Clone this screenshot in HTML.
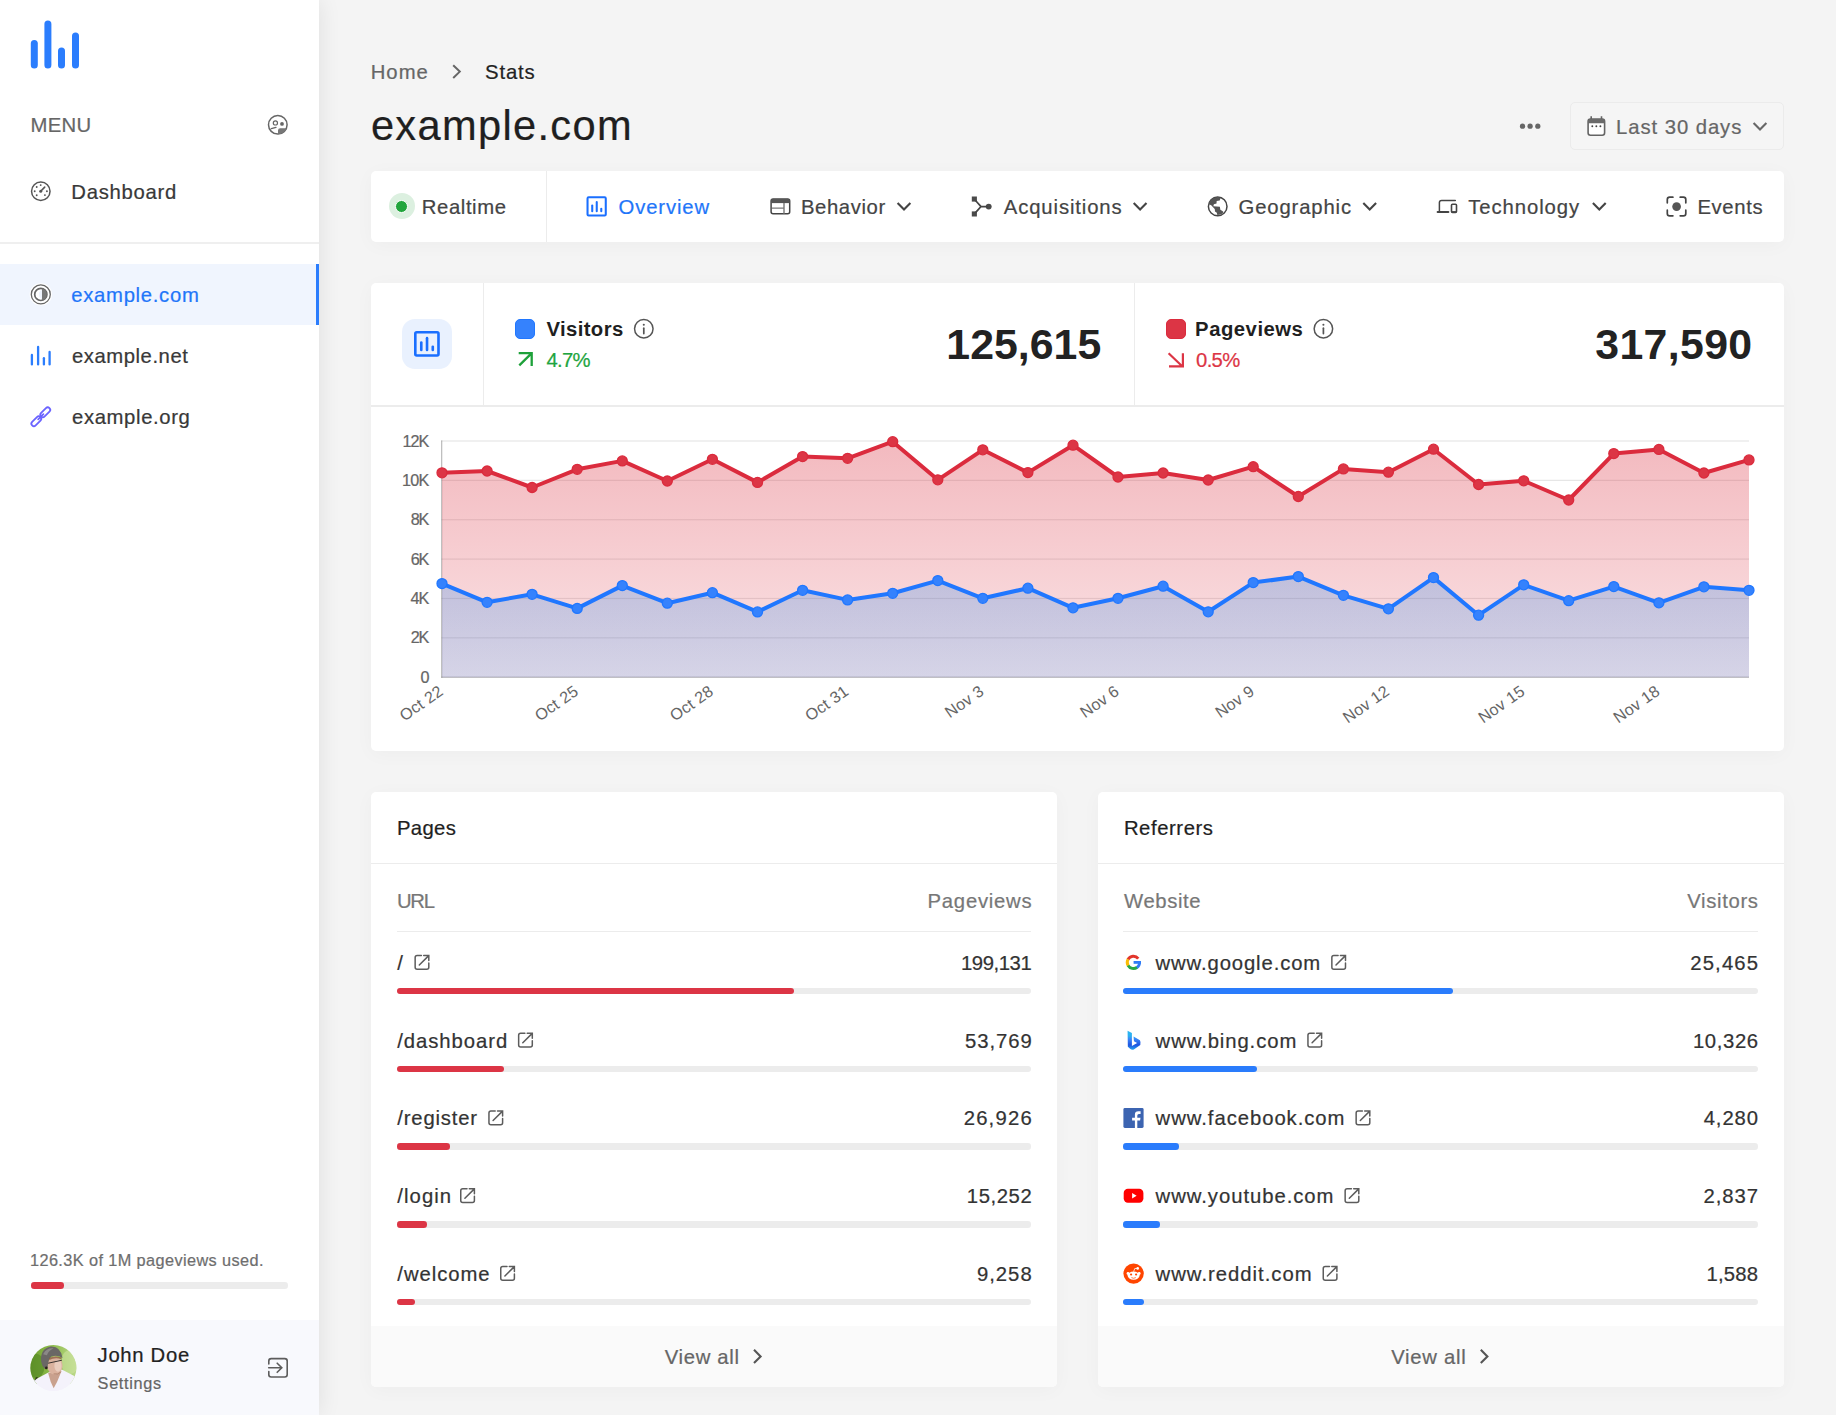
<!DOCTYPE html>
<html lang="en">
<head>
<meta charset="utf-8">
<title>example.com - Stats</title>
<style>
html,body{margin:0;padding:0}
body{width:1836px;height:1415px;position:relative;overflow:hidden;background:#f4f4f4;font-family:"Liberation Sans",sans-serif;}
.t{position:absolute;white-space:nowrap;line-height:1;font-family:"Liberation Sans",sans-serif;-webkit-text-stroke-width:.22px;}
.a{position:absolute;}
.card{position:absolute;background:#fff;border-radius:5px;box-shadow:0 3px 20px rgba(0,0,0,.03);}
.hl{position:absolute;height:1px;background:#ececec;}
.vl{position:absolute;width:1px;background:#ececec;}
.bar{position:absolute;height:6.5px;border-radius:3.25px;background:#ececec;}
.bar i{position:absolute;left:0;top:0;height:6.5px;border-radius:3.25px;display:block;}
.red i{background:#dc3545}.blue i{background:#2a7cfc}
svg{position:absolute;overflow:visible}
</style>
</head>
<body>
<!-- sidebar -->
<div class="a" style="left:0;top:0;width:319px;height:1415px;background:#fff;box-shadow:0 0 22px rgba(0,0,0,.09);"></div>
<div class="hl" style="left:0;top:242.2px;width:319px;height:1.4px;background:#efefef"></div>
<div class="a" style="left:0;top:264px;width:319px;height:61px;background:#f0f5fe;"></div>
<div class="a" style="left:316px;top:264px;width:3px;height:61px;background:#2b7dfd;"></div>
<div class="bar red" style="left:30.6px;top:1282.4px;width:257.4px;"><i style="width:33.3px"></i></div>
<div class="a" style="left:0;top:1320px;width:319px;height:95px;background:#f8f9fd;"></div>

<!-- date button -->
<div class="a" style="left:1570px;top:102px;width:212px;height:46px;border:1px solid #ebebeb;border-radius:5px;background:#f5f5f5"></div>

<!-- nav card -->
<div class="card" style="left:371px;top:171px;width:1412.5px;height:71px;"></div>
<div class="vl" style="left:546px;top:171px;height:71px;"></div>
<div class="a" style="left:388.6px;top:193.3px;width:26px;height:26px;border-radius:50%;background:#dcf0e0"></div>
<div class="a" style="left:395.2px;top:199.9px;width:10.8px;height:10.8px;border-radius:50%;background:#22a53d;border:1px solid #fff"></div>

<!-- stats card -->
<div class="card" style="left:371px;top:283px;width:1412.5px;height:467.5px;"></div>
<div class="hl" style="left:371px;top:405px;width:1412.5px;height:1.5px"></div>
<div class="vl" style="left:483px;top:283px;height:122px;"></div>
<div class="vl" style="left:1133.6px;top:283px;height:122px;"></div>
<div class="a" style="left:401.7px;top:318.7px;width:50.7px;height:50.7px;border-radius:13px;background:#e9f1fe"></div>
<div class="a" style="left:515.3px;top:318.7px;width:18.1px;height:18.1px;border-radius:5px;background:#3582fd;border:1.1px solid #2077ff"></div>
<div class="a" style="left:1165.5px;top:318.7px;width:18px;height:18.1px;border-radius:5px;background:#dc3545;border:1.1px solid #db2b3d"></div>

<!-- pages card -->
<div class="card" style="left:371px;top:792px;width:686.3px;height:595px;overflow:hidden">
  <div class="a" style="left:0;top:534px;width:100%;height:61px;background:#fafafa"></div>
</div>
<div class="hl" style="left:371px;top:862.5px;width:686.3px;height:1.5px"></div>
<div class="hl" style="left:397px;top:930.5px;width:634.4px;height:1.5px"></div>
<div class="bar red" style="left:396.6px;top:987.90px;width:634.8px"><i style="width:397.9px"></i></div>
<div class="bar red" style="left:396.6px;top:1065.65px;width:634.8px"><i style="width:107px"></i></div>
<div class="bar red" style="left:396.6px;top:1143.40px;width:634.8px"><i style="width:53.6px"></i></div>
<div class="bar red" style="left:396.6px;top:1221.15px;width:634.8px"><i style="width:30.4px"></i></div>
<div class="bar red" style="left:396.6px;top:1298.90px;width:634.8px"><i style="width:18.8px"></i></div>

<!-- referrers card -->
<div class="card" style="left:1098px;top:792px;width:685.7px;height:595px;overflow:hidden">
  <div class="a" style="left:0;top:534px;width:100%;height:61px;background:#fafafa"></div>
</div>
<div class="hl" style="left:1098px;top:862.5px;width:685.7px;height:1.5px"></div>
<div class="hl" style="left:1123px;top:930.5px;width:634.8px;height:1.5px"></div>
<div class="bar blue" style="left:1122.9px;top:987.90px;width:634.9px"><i style="width:330.6px"></i></div>
<div class="bar blue" style="left:1122.9px;top:1065.65px;width:634.9px"><i style="width:134.1px"></i></div>
<div class="bar blue" style="left:1122.9px;top:1143.40px;width:634.9px"><i style="width:56.6px"></i></div>
<div class="bar blue" style="left:1122.9px;top:1221.15px;width:634.9px"><i style="width:37.3px"></i></div>
<div class="bar blue" style="left:1122.9px;top:1298.90px;width:634.9px"><i style="width:20.8px"></i></div>
<!-- chart -->
<svg width="1836" height="1415" viewBox="0 0 1836 1415" style="left:0;top:0;pointer-events:none">
<defs>
<linearGradient id="gr" gradientUnits="userSpaceOnUse" x1="0" y1="441.0" x2="0" y2="677.2"><stop offset="0" stop-color="#dc3545" stop-opacity="0.345"/><stop offset="1" stop-color="#dc3545" stop-opacity="0.135"/></linearGradient>
<linearGradient id="gb" gradientUnits="userSpaceOnUse" x1="0" y1="441.0" x2="0" y2="677.2"><stop offset="0" stop-color="#2f8eed" stop-opacity="0.395"/><stop offset="1" stop-color="#2f8eed" stop-opacity="0.18"/></linearGradient>
</defs>
<rect x="441.5" y="440.40" width="1307.5" height="1.2" fill="#000" fill-opacity="0.1"/>
<rect x="441.5" y="479.77" width="1307.5" height="1.2" fill="#000" fill-opacity="0.1"/>
<rect x="441.5" y="519.13" width="1307.5" height="1.2" fill="#000" fill-opacity="0.1"/>
<rect x="441.5" y="558.50" width="1307.5" height="1.2" fill="#000" fill-opacity="0.1"/>
<rect x="441.5" y="597.87" width="1307.5" height="1.2" fill="#000" fill-opacity="0.1"/>
<rect x="441.5" y="637.23" width="1307.5" height="1.2" fill="#000" fill-opacity="0.1"/>
<rect x="441.5" y="676.60" width="1307.5" height="1.3" fill="#000" fill-opacity="0.25"/>
<rect x="441.0" y="440.4" width="1.3" height="237.4" fill="#000" fill-opacity="0.25"/>
<path d="M442.0,677.2 L442.0,472.8 L487.1,471.0 L532.1,487.5 L577.2,469.3 L622.3,460.9 L667.3,481.0 L712.4,459.3 L757.5,482.4 L802.6,456.6 L847.6,458.3 L892.7,441.7 L937.8,479.8 L982.8,449.8 L1027.9,472.6 L1073.0,445.2 L1118.0,477.0 L1163.1,473.0 L1208.2,480.0 L1253.2,466.7 L1298.3,496.5 L1343.4,468.9 L1388.4,472.2 L1433.5,449.2 L1478.6,484.5 L1523.7,480.8 L1568.7,500.0 L1613.8,453.6 L1658.9,449.4 L1703.9,473.0 L1749.0,459.9 L1749.0,677.2 Z" fill="url(#gr)"/>
<path d="M442.0,677.2 L442.0,583.6 L487.1,602.3 L532.1,594.3 L577.2,608.4 L622.3,585.6 L667.3,603.2 L712.4,592.7 L757.5,611.9 L802.6,590.3 L847.6,599.9 L892.7,593.3 L937.8,580.6 L982.8,598.3 L1027.9,588.2 L1073.0,607.8 L1118.0,598.3 L1163.1,586.2 L1208.2,611.8 L1253.2,582.6 L1298.3,576.6 L1343.4,595.3 L1388.4,608.8 L1433.5,577.6 L1478.6,615.2 L1523.7,584.8 L1568.7,600.7 L1613.8,586.6 L1658.9,602.8 L1703.9,586.8 L1749.0,590.3 L1749.0,677.2 Z" fill="url(#gb)"/>
<polyline points="442.0,472.8 487.1,471.0 532.1,487.5 577.2,469.3 622.3,460.9 667.3,481.0 712.4,459.3 757.5,482.4 802.6,456.6 847.6,458.3 892.7,441.7 937.8,479.8 982.8,449.8 1027.9,472.6 1073.0,445.2 1118.0,477.0 1163.1,473.0 1208.2,480.0 1253.2,466.7 1298.3,496.5 1343.4,468.9 1388.4,472.2 1433.5,449.2 1478.6,484.5 1523.7,480.8 1568.7,500.0 1613.8,453.6 1658.9,449.4 1703.9,473.0 1749.0,459.9" fill="none" stroke="#db2b3d" stroke-width="4" stroke-linejoin="round" stroke-linecap="round"/>
<circle cx="442.0" cy="472.8" r="5.0" fill="#dc3545" stroke="#db2b3d" stroke-width="1.3"/>
<circle cx="487.1" cy="471.0" r="5.0" fill="#dc3545" stroke="#db2b3d" stroke-width="1.3"/>
<circle cx="532.1" cy="487.5" r="5.0" fill="#dc3545" stroke="#db2b3d" stroke-width="1.3"/>
<circle cx="577.2" cy="469.3" r="5.0" fill="#dc3545" stroke="#db2b3d" stroke-width="1.3"/>
<circle cx="622.3" cy="460.9" r="5.0" fill="#dc3545" stroke="#db2b3d" stroke-width="1.3"/>
<circle cx="667.3" cy="481.0" r="5.0" fill="#dc3545" stroke="#db2b3d" stroke-width="1.3"/>
<circle cx="712.4" cy="459.3" r="5.0" fill="#dc3545" stroke="#db2b3d" stroke-width="1.3"/>
<circle cx="757.5" cy="482.4" r="5.0" fill="#dc3545" stroke="#db2b3d" stroke-width="1.3"/>
<circle cx="802.6" cy="456.6" r="5.0" fill="#dc3545" stroke="#db2b3d" stroke-width="1.3"/>
<circle cx="847.6" cy="458.3" r="5.0" fill="#dc3545" stroke="#db2b3d" stroke-width="1.3"/>
<circle cx="892.7" cy="441.7" r="5.0" fill="#dc3545" stroke="#db2b3d" stroke-width="1.3"/>
<circle cx="937.8" cy="479.8" r="5.0" fill="#dc3545" stroke="#db2b3d" stroke-width="1.3"/>
<circle cx="982.8" cy="449.8" r="5.0" fill="#dc3545" stroke="#db2b3d" stroke-width="1.3"/>
<circle cx="1027.9" cy="472.6" r="5.0" fill="#dc3545" stroke="#db2b3d" stroke-width="1.3"/>
<circle cx="1073.0" cy="445.2" r="5.0" fill="#dc3545" stroke="#db2b3d" stroke-width="1.3"/>
<circle cx="1118.0" cy="477.0" r="5.0" fill="#dc3545" stroke="#db2b3d" stroke-width="1.3"/>
<circle cx="1163.1" cy="473.0" r="5.0" fill="#dc3545" stroke="#db2b3d" stroke-width="1.3"/>
<circle cx="1208.2" cy="480.0" r="5.0" fill="#dc3545" stroke="#db2b3d" stroke-width="1.3"/>
<circle cx="1253.2" cy="466.7" r="5.0" fill="#dc3545" stroke="#db2b3d" stroke-width="1.3"/>
<circle cx="1298.3" cy="496.5" r="5.0" fill="#dc3545" stroke="#db2b3d" stroke-width="1.3"/>
<circle cx="1343.4" cy="468.9" r="5.0" fill="#dc3545" stroke="#db2b3d" stroke-width="1.3"/>
<circle cx="1388.4" cy="472.2" r="5.0" fill="#dc3545" stroke="#db2b3d" stroke-width="1.3"/>
<circle cx="1433.5" cy="449.2" r="5.0" fill="#dc3545" stroke="#db2b3d" stroke-width="1.3"/>
<circle cx="1478.6" cy="484.5" r="5.0" fill="#dc3545" stroke="#db2b3d" stroke-width="1.3"/>
<circle cx="1523.7" cy="480.8" r="5.0" fill="#dc3545" stroke="#db2b3d" stroke-width="1.3"/>
<circle cx="1568.7" cy="500.0" r="5.0" fill="#dc3545" stroke="#db2b3d" stroke-width="1.3"/>
<circle cx="1613.8" cy="453.6" r="5.0" fill="#dc3545" stroke="#db2b3d" stroke-width="1.3"/>
<circle cx="1658.9" cy="449.4" r="5.0" fill="#dc3545" stroke="#db2b3d" stroke-width="1.3"/>
<circle cx="1703.9" cy="473.0" r="5.0" fill="#dc3545" stroke="#db2b3d" stroke-width="1.3"/>
<circle cx="1749.0" cy="459.9" r="5.0" fill="#dc3545" stroke="#db2b3d" stroke-width="1.3"/>
<polyline points="442.0,583.6 487.1,602.3 532.1,594.3 577.2,608.4 622.3,585.6 667.3,603.2 712.4,592.7 757.5,611.9 802.6,590.3 847.6,599.9 892.7,593.3 937.8,580.6 982.8,598.3 1027.9,588.2 1073.0,607.8 1118.0,598.3 1163.1,586.2 1208.2,611.8 1253.2,582.6 1298.3,576.6 1343.4,595.3 1388.4,608.8 1433.5,577.6 1478.6,615.2 1523.7,584.8 1568.7,600.7 1613.8,586.6 1658.9,602.8 1703.9,586.8 1749.0,590.3" fill="none" stroke="#2077ff" stroke-width="4" stroke-linejoin="round" stroke-linecap="round"/>
<circle cx="442.0" cy="583.6" r="5.0" fill="#3582fd" stroke="#2077ff" stroke-width="1.3"/>
<circle cx="487.1" cy="602.3" r="5.0" fill="#3582fd" stroke="#2077ff" stroke-width="1.3"/>
<circle cx="532.1" cy="594.3" r="5.0" fill="#3582fd" stroke="#2077ff" stroke-width="1.3"/>
<circle cx="577.2" cy="608.4" r="5.0" fill="#3582fd" stroke="#2077ff" stroke-width="1.3"/>
<circle cx="622.3" cy="585.6" r="5.0" fill="#3582fd" stroke="#2077ff" stroke-width="1.3"/>
<circle cx="667.3" cy="603.2" r="5.0" fill="#3582fd" stroke="#2077ff" stroke-width="1.3"/>
<circle cx="712.4" cy="592.7" r="5.0" fill="#3582fd" stroke="#2077ff" stroke-width="1.3"/>
<circle cx="757.5" cy="611.9" r="5.0" fill="#3582fd" stroke="#2077ff" stroke-width="1.3"/>
<circle cx="802.6" cy="590.3" r="5.0" fill="#3582fd" stroke="#2077ff" stroke-width="1.3"/>
<circle cx="847.6" cy="599.9" r="5.0" fill="#3582fd" stroke="#2077ff" stroke-width="1.3"/>
<circle cx="892.7" cy="593.3" r="5.0" fill="#3582fd" stroke="#2077ff" stroke-width="1.3"/>
<circle cx="937.8" cy="580.6" r="5.0" fill="#3582fd" stroke="#2077ff" stroke-width="1.3"/>
<circle cx="982.8" cy="598.3" r="5.0" fill="#3582fd" stroke="#2077ff" stroke-width="1.3"/>
<circle cx="1027.9" cy="588.2" r="5.0" fill="#3582fd" stroke="#2077ff" stroke-width="1.3"/>
<circle cx="1073.0" cy="607.8" r="5.0" fill="#3582fd" stroke="#2077ff" stroke-width="1.3"/>
<circle cx="1118.0" cy="598.3" r="5.0" fill="#3582fd" stroke="#2077ff" stroke-width="1.3"/>
<circle cx="1163.1" cy="586.2" r="5.0" fill="#3582fd" stroke="#2077ff" stroke-width="1.3"/>
<circle cx="1208.2" cy="611.8" r="5.0" fill="#3582fd" stroke="#2077ff" stroke-width="1.3"/>
<circle cx="1253.2" cy="582.6" r="5.0" fill="#3582fd" stroke="#2077ff" stroke-width="1.3"/>
<circle cx="1298.3" cy="576.6" r="5.0" fill="#3582fd" stroke="#2077ff" stroke-width="1.3"/>
<circle cx="1343.4" cy="595.3" r="5.0" fill="#3582fd" stroke="#2077ff" stroke-width="1.3"/>
<circle cx="1388.4" cy="608.8" r="5.0" fill="#3582fd" stroke="#2077ff" stroke-width="1.3"/>
<circle cx="1433.5" cy="577.6" r="5.0" fill="#3582fd" stroke="#2077ff" stroke-width="1.3"/>
<circle cx="1478.6" cy="615.2" r="5.0" fill="#3582fd" stroke="#2077ff" stroke-width="1.3"/>
<circle cx="1523.7" cy="584.8" r="5.0" fill="#3582fd" stroke="#2077ff" stroke-width="1.3"/>
<circle cx="1568.7" cy="600.7" r="5.0" fill="#3582fd" stroke="#2077ff" stroke-width="1.3"/>
<circle cx="1613.8" cy="586.6" r="5.0" fill="#3582fd" stroke="#2077ff" stroke-width="1.3"/>
<circle cx="1658.9" cy="602.8" r="5.0" fill="#3582fd" stroke="#2077ff" stroke-width="1.3"/>
<circle cx="1703.9" cy="586.8" r="5.0" fill="#3582fd" stroke="#2077ff" stroke-width="1.3"/>
<circle cx="1749.0" cy="590.3" r="5.0" fill="#3582fd" stroke="#2077ff" stroke-width="1.3"/>
<text x="440.8" y="688.9" transform="rotate(-35 440.8 688.9)" text-anchor="end" dominant-baseline="central" font-family="Liberation Sans, sans-serif" font-size="16.2" letter-spacing="0.15" fill="#666">Oct 22</text>
<text x="576.0" y="688.9" transform="rotate(-35 576.0 688.9)" text-anchor="end" dominant-baseline="central" font-family="Liberation Sans, sans-serif" font-size="16.2" letter-spacing="0.15" fill="#666">Oct 25</text>
<text x="711.2" y="688.9" transform="rotate(-35 711.2 688.9)" text-anchor="end" dominant-baseline="central" font-family="Liberation Sans, sans-serif" font-size="16.2" letter-spacing="0.15" fill="#666">Oct 28</text>
<text x="846.4" y="688.9" transform="rotate(-35 846.4 688.9)" text-anchor="end" dominant-baseline="central" font-family="Liberation Sans, sans-serif" font-size="16.2" letter-spacing="0.15" fill="#666">Oct 31</text>
<text x="981.6" y="688.9" transform="rotate(-35 981.6 688.9)" text-anchor="end" dominant-baseline="central" font-family="Liberation Sans, sans-serif" font-size="16.2" letter-spacing="0.15" fill="#666">Nov 3</text>
<text x="1116.8" y="688.9" transform="rotate(-35 1116.8 688.9)" text-anchor="end" dominant-baseline="central" font-family="Liberation Sans, sans-serif" font-size="16.2" letter-spacing="0.15" fill="#666">Nov 6</text>
<text x="1252.0" y="688.9" transform="rotate(-35 1252.0 688.9)" text-anchor="end" dominant-baseline="central" font-family="Liberation Sans, sans-serif" font-size="16.2" letter-spacing="0.15" fill="#666">Nov 9</text>
<text x="1387.2" y="688.9" transform="rotate(-35 1387.2 688.9)" text-anchor="end" dominant-baseline="central" font-family="Liberation Sans, sans-serif" font-size="16.2" letter-spacing="0.15" fill="#666">Nov 12</text>
<text x="1522.5" y="688.9" transform="rotate(-35 1522.5 688.9)" text-anchor="end" dominant-baseline="central" font-family="Liberation Sans, sans-serif" font-size="16.2" letter-spacing="0.15" fill="#666">Nov 15</text>
<text x="1657.7" y="688.9" transform="rotate(-35 1657.7 688.9)" text-anchor="end" dominant-baseline="central" font-family="Liberation Sans, sans-serif" font-size="16.2" letter-spacing="0.15" fill="#666">Nov 18</text>
</svg>
<!-- icons -->
<svg width="1836" height="1415" viewBox="0 0 1836 1415" style="left:0;top:0" fill="none">
<defs>
<symbol id="ext" viewBox="0 0 15.2 15.2" overflow="visible"><path d="M7 .75H2.75Q.75 .75 .75 2.75V12.35Q.75 14.35 2.75 14.35H12.4Q14.4 14.35 14.4 12.35V8.1M9.3 .75H14.4V5.8M14.1 1.05L4.9 10.2" stroke="#5c5c5c" stroke-width="1.5" fill="none" stroke-linecap="round"/></symbol>
<symbol id="chd" viewBox="-8 -5 16 10" overflow="visible"><path d="M-6.4 -3.3L0 3.3L6.4 -3.3" stroke="#444" stroke-width="2.1" fill="none"/></symbol>
<symbol id="info" viewBox="-10 -10 20 20" overflow="visible"><circle r="9.25" stroke="#555" stroke-width="1.5"/><circle cy="-4.1" r="1.05" fill="#555"/><path d="M0 -.6V4.8" stroke="#555" stroke-width="1.7" stroke-linecap="round"/></symbol>
<clipPath id="avc"><circle cx="53.4" cy="1368" r="23"/></clipPath>
<linearGradient id="avg" x1="30" x2="77" y1="0" y2="0" gradientUnits="userSpaceOnUse"><stop offset="0" stop-color="#6f9f30"/><stop offset=".45" stop-color="#8cbb4a"/><stop offset="1" stop-color="#bcd98a"/></linearGradient>
<linearGradient id="bing" x1="0" x2="0" y1="1030" y2="1050" gradientUnits="userSpaceOnUse"><stop offset="0" stop-color="#2bb8f2"/><stop offset=".3" stop-color="#2bb0f0"/><stop offset=".45" stop-color="#3a86f8"/><stop offset=".75" stop-color="#1f55e0"/><stop offset="1" stop-color="#25a8f0"/></linearGradient>
</defs>
<path d="M34.3 43.6V65" stroke="#2b7dfd" stroke-width="7" stroke-linecap="round"/>
<path d="M47.9 23.9V65" stroke="#2b7dfd" stroke-width="7" stroke-linecap="round"/>
<path d="M61.5 50.9V65" stroke="#2b7dfd" stroke-width="7" stroke-linecap="round"/>
<path d="M75.5 36.1V65" stroke="#2b7dfd" stroke-width="7" stroke-linecap="round"/>
<g stroke="#666" fill="none"><circle cx="277.8" cy="124.8" r="9.3" stroke-width="1.5"/><circle cx="275.4" cy="122.9" r="2.1" stroke-width="1.2"/><path d="M271.3 128.7L276 127.4" stroke-width="1.3" stroke-linecap="round"/></g>
<circle cx="282" cy="123.9" r="1.9" fill="#666"/>
<path d="M278 134.2V130.4Q278 128.3 280.2 128.3H286.6A9.6 9.6 0 0 1 278 134.2Z" fill="#777"/>
<circle cx="40.8" cy="191.2" r="9.25" stroke="#555" stroke-width="1.5"/>
<circle cx="40.7" cy="185.1" r="0.95" fill="#555"/>
<circle cx="36.7" cy="187" r="0.95" fill="#555"/>
<circle cx="34.7" cy="191.2" r="0.95" fill="#555"/>
<circle cx="36.7" cy="195.3" r="0.95" fill="#555"/>
<circle cx="44.9" cy="195.1" r="0.95" fill="#555"/>
<circle cx="46.9" cy="191.2" r="0.95" fill="#555"/>
<path d="M40.7 191.2L44.7 187.1" stroke="#555" stroke-width="1.6" stroke-linecap="round"/><circle cx="40.7" cy="191.2" r="1.5" fill="#555"/>
<circle cx="40.8" cy="294.4" r="11.2" fill="#fff"/><circle cx="40.8" cy="294.4" r="9.5" stroke="#666" stroke-width="1.3"/><circle cx="40.8" cy="294.4" r="6.1" stroke="#666" stroke-width="1.7" fill="#fff"/>
<path d="M41.9 288.6A5.9 5.9 0 0 1 41.9 300.2Z" fill="#777"/><path d="M41.9 289.3Q35.5 294.4 41.9 299.5Z" fill="#eff4fe"/>
<path d="M31.9 355V364.4" stroke="#2b7dfd" stroke-width="2.3" stroke-linecap="round"/>
<path d="M38.1 347V364.4" stroke="#2b7dfd" stroke-width="2.3" stroke-linecap="round"/>
<path d="M43.9 358.2V364.4" stroke="#2b7dfd" stroke-width="2.3" stroke-linecap="round"/>
<path d="M49.6 352V364.4" stroke="#2b7dfd" stroke-width="2.3" stroke-linecap="round"/>
<rect x="-5.9" y="-2.5" width="11.8" height="5" rx="2.5" transform="translate(36.3 421.2) rotate(-45)" stroke="#6b63ff" stroke-width="1.8"/>
<rect x="-5.9" y="-2.5" width="11.8" height="5" rx="2.5" transform="translate(45.3 412.3) rotate(-45)" stroke="#6b63ff" stroke-width="1.8"/>
<path d="M38.2 419.3L43.4 414.1" stroke="#6b63ff" stroke-width="1.8" stroke-linecap="round"/>
<g clip-path="url(#avc)">
<rect x="30" y="1344" width="48" height="48" fill="#f4f2fb"/>
<rect x="30" y="1344" width="48" height="40" fill="url(#avg)"/>
<ellipse cx="36.5" cy="1366" rx="8" ry="12" fill="#4f8420" opacity=".55"/>
<ellipse cx="70" cy="1362" rx="9" ry="12" fill="#cfe6a4" opacity=".55"/>
<path d="M30.34 1391.21L30.34 1382.56L33.94 1380.15L48.37 1372.46L61.35 1369.34L74.81 1376.31L77.21 1391.21Z" fill="#f4f2fb"/>
<path d="M34.42 1380.88L38.27 1377.27L35.87 1377.27Z" fill="#1d1d12" opacity=".8"/>
<path d="M48.12 1372.94L61.59 1371.02L57.02 1382.08L53.65 1388.33L50.77 1382.08Z" fill="#c9a18e"/>
<ellipse cx="54.86" cy="1365.49" rx="7.7" ry="9.3" fill="#dab29e"/>
<ellipse cx="57.98" cy="1365.73" rx="3.6" ry="6" fill="#ecd2c4" opacity=".8"/>
<path d="M41.15 1361.40Q39.95 1348.42 50.77 1346.40Q60.87 1346.02 62.55 1358.04Q57.02 1354.19 51.25 1356.60Q48.12 1359.00 47.64 1367.65L45.24 1369.34Q41.63 1365.73 41.15 1361.40Z" fill="#6a6765"/>
<path d="M43.08 1354.19Q46.92 1347.46 53.65 1348.42Q48.85 1349.87 46.92 1355.15Z" fill="#9a9896" opacity=".7"/>
<path d="M48.85 1358.04Q54.62 1355.15 61.83 1357.56L61.35 1359.00Q54.62 1357.08 49.33 1359.96Z" fill="#8a5a3c" opacity=".75"/>
<path d="M48.12 1363.23L61.92 1360.20" stroke="#3a3330" stroke-width="1"/>
<circle cx="46.35" cy="1367.89" r="1.3" fill="#2a1d18"/>
<path d="M53.65 1373.90Q57.98 1374.87 60.87 1371.98" stroke="#9a6a55" stroke-width=".8" fill="none" opacity=".7"/>
</g>
<g stroke="#5c5c5c" stroke-width="1.6" stroke-linecap="round"><path d="M268.8 1364V1361Q268.8 1358.6 271.2 1358.6H284.8Q287.2 1358.6 287.2 1361V1374.6Q287.2 1377 284.8 1377H271.2Q268.8 1377 268.8 1374.6V1371.6"/><path d="M268.7 1367.7H281.6M277.2 1363.2L281.8 1367.7L277.2 1372.3"/></g>
<path d="M453.2 65.2L459.8 71.6L453.2 78" stroke="#666" stroke-width="2"/>
<circle cx="1522.5" cy="126.2" r="2.6" fill="#666"/>
<circle cx="1530.1" cy="126.2" r="2.6" fill="#666"/>
<circle cx="1537.8" cy="126.2" r="2.6" fill="#666"/>
<rect x="1588.1" y="119" width="16.5" height="16.2" rx="2.4" fill="#fff" stroke="#646464" stroke-width="1.6"/>
<path d="M1588.1 123.3V121.6Q1588.1 119 1590.7 119H1602Q1604.6 119 1604.6 121.6V123.3Z" fill="#6a6a6a"/>
<path d="M1591.2 116.2V119M1601.5 116.2V119" stroke="#646464" stroke-width="1.6"/>
<circle cx="1592.3" cy="126.3" r="0.95" fill="#444"/>
<circle cx="1596.35" cy="126.3" r="0.95" fill="#444"/>
<circle cx="1600.4" cy="126.3" r="0.95" fill="#444"/>
<use href="#chd" x="1752" y="121.2" width="16" height="10" opacity=".8"/>
<use href="#chd" x="896.0" y="201.2" width="16" height="10"/>
<use href="#chd" x="1132.1" y="201.2" width="16" height="10"/>
<use href="#chd" x="1361.7" y="201.2" width="16" height="10"/>
<use href="#chd" x="1591.3" y="201.2" width="16" height="10"/>
<rect x="587.53" y="197.33" width="18.24" height="18.24" rx="1.11" stroke="#1a6fff" stroke-width="2.06"/>
<path d="M592.23 205.45V211.27" stroke="#1a6fff" stroke-width="2.06" stroke-linecap="round"/>
<path d="M596.75 201.93V211.27" stroke="#1a6fff" stroke-width="2.06" stroke-linecap="round"/>
<path d="M601.27 208.76V211.27" stroke="#1a6fff" stroke-width="2.06" stroke-linecap="round"/>
<rect x="415.31" y="332.31" width="23.18" height="23.18" rx="1.40" stroke="#1a6fff" stroke-width="2.62"/>
<path d="M421.28 342.62V350.03" stroke="#1a6fff" stroke-width="2.62" stroke-linecap="round"/>
<path d="M427.03 338.15V350.03" stroke="#1a6fff" stroke-width="2.62" stroke-linecap="round"/>
<path d="M432.78 346.84V350.03" stroke="#1a6fff" stroke-width="2.62" stroke-linecap="round"/>
<rect x="771.1" y="199.1" width="18.6" height="14.6" rx="2" stroke="#444" stroke-width="1.5"/>
<rect x="771.1" y="199.1" width="18.6" height="4" fill="#555"/>
<path d="M784 203V213.7M772 208.1H784" stroke="#777" stroke-width="1.4"/>
<rect x="971.8" y="196.5" width="5.1" height="5.1" fill="#4a4a4a"/><rect x="971.8" y="211.4" width="5.1" height="5.1" fill="#4a4a4a"/><circle cx="988.7" cy="206.6" r="2.95" fill="#4a4a4a"/>
<path d="M975.5 200.5L981 206.6L975.5 212.6M981 206.6H988" stroke="#444" stroke-width="1.7"/>
<circle cx="1217.7" cy="206.4" r="9.3" stroke="#444" stroke-width="1.5"/>
<path d="M1208.78 204.27 L1209.16 202.23 L1210.94 199.69 L1214.25 197.65 L1217.81 197.02 L1220.61 197.65 L1219.72 200.45 L1216.67 200.96 L1216.54 203.38 L1213.87 204.27 L1213.36 206.30 L1219.85 206.81 L1220.36 209.87 L1222.77 211.14 L1223.54 212.28 L1221.37 214.19 L1217.81 214.95 L1217.18 214.70 L1216.79 212.79 L1215.01 211.39 L1214.76 208.97 L1211.20 205.28Z" fill="#555"/>
<path d="M1455.3 200.4H1441.6Q1439.4 200.4 1439.4 202.6V211.6" stroke="#444" stroke-width="1.5" stroke-linecap="round"/>
<path d="M1437.6 212.1H1448.4" stroke="#444" stroke-width="2" stroke-linecap="round"/>
<rect x="1451.5" y="204.2" width="5" height="8.3" rx="1" stroke="#444" stroke-width="1.6"/><path d="M1451.5 211.8H1456.5" stroke="#444" stroke-width="1.4"/>
<path d="M1667.3 202.79999999999998V199.6Q1667.3 197.2 1669.7 197.2H1672.8999999999999M1680.2 197.2H1683.3999999999999Q1685.8 197.2 1685.8 199.6V202.79999999999998M1685.8 210.20000000000002V213.4Q1685.8 215.8 1683.3999999999999 215.8H1680.2M1672.8999999999999 215.8H1669.7Q1667.3 215.8 1667.3 213.4V210.20000000000002" stroke="#444" stroke-width="1.7" stroke-linecap="round"/>
<circle cx="1676.6" cy="206.6" r="4.35" fill="#555"/>
<use href="#info" x="633.8" y="318.8" width="20" height="20"/>
<use href="#info" x="1313.4" y="318.8" width="20" height="20"/>
<path d="M519.3 365.4L531.2 353.6M518.7 353.1H531.7V366" stroke="#1ea13a" stroke-width="2.3"/>
<path d="M1168.6 353.3L1182.2 366.2M1169 366.4H1182.9V353.2" stroke="#dc3545" stroke-width="2.2"/>
<use href="#ext" x="414.4" y="954.80" width="15.2" height="15.2"/>
<use href="#ext" x="517.9" y="1032.55" width="15.2" height="15.2"/>
<use href="#ext" x="488.2" y="1110.30" width="15.2" height="15.2"/>
<use href="#ext" x="460" y="1188.05" width="15.2" height="15.2"/>
<use href="#ext" x="500" y="1265.80" width="15.2" height="15.2"/>
<use href="#ext" x="1331.1" y="954.80" width="15.2" height="15.2"/>
<use href="#ext" x="1307.2" y="1032.55" width="15.2" height="15.2"/>
<use href="#ext" x="1355.4" y="1110.30" width="15.2" height="15.2"/>
<use href="#ext" x="1344.4" y="1188.05" width="15.2" height="15.2"/>
<use href="#ext" x="1322.5" y="1265.80" width="15.2" height="15.2"/>
<path d="M754 1349.8L760.6 1356.4L754 1363" stroke="#555" stroke-width="2.1"/>
<path d="M1480.8 1349.8L1487.4 1356.4L1480.8 1363" stroke="#555" stroke-width="2.1"/>
<path d="M1138.25 958.61A6.15 6.15 0 0 0 1127.97 959.51" stroke="#e2352b" stroke-width="2.9"/>
<path d="M1128.07 959.32A6.15 6.15 0 0 0 1128.18 965.66" stroke="#fbbc05" stroke-width="2.9"/>
<path d="M1128.07 965.48A6.15 6.15 0 0 0 1137.19 967.25" stroke="#28a745" stroke-width="2.9"/>
<path d="M1136.93 967.44A6.15 6.15 0 0 0 1139.55 962.40" stroke="#2f7cf6" stroke-width="2.9"/>
<path d="M1133.6000000000001 962.4H1141.0" stroke="#2f7cf6" stroke-width="2.8"/>
<path d="M1127.58 1030.76 L1131.90 1033.05 L1131.90 1046.03 L1137.12 1042.97 L1133.94 1041.32 L1133.56 1036.61 L1139.92 1040.18 Q1141.06 1041.83 1140.30 1045.01 L1133.81 1049.46 Q1131.78 1050.10 1130.12 1048.83 L1127.83 1046.79 Z" fill="url(#bing)"/>
<rect x="1123.4" y="1108" width="20.2" height="20" rx="1.4" fill="#3c64b1"/>
<path d="M1134.9 1128V1120.4H1132.1V1117.8H1134.9V1114.6Q1134.9 1111.3 1138.4 1111.3H1140.6V1113.9H1138.9Q1137.3 1113.9 1137.3 1115.4V1117.8H1140.5L1140.1 1120.4H1137.3V1128Z" fill="#fff"/>
<rect x="1123.7" y="1188.7" width="19.7" height="14.1" rx="4.2" fill="#ff0000"/><path d="M1132.1 1193.1V1198.5L1136.6 1195.8Z" fill="#fff"/>
<circle cx="1133.6" cy="1273.6" r="10.2" fill="#ff4500"/>
<ellipse cx="1133.6" cy="1275.6" rx="6" ry="4.2" fill="#fff"/><circle cx="1128" cy="1273.5" r="1.4" fill="#fff"/><circle cx="1139.2" cy="1273.5" r="1.4" fill="#fff"/>
<circle cx="1131.1" cy="1274.5" r="1.1" fill="#ff4500"/><circle cx="1136.1" cy="1274.5" r="1.1" fill="#ff4500"/>
<path d="M1133.6 1271.6L1134.8 1268.5L1137.6 1268.4" stroke="#fff" stroke-width=".8"/><circle cx="1137.7" cy="1268.4" r="1.3" fill="#fff"/>
<path d="M1131.4 1277.6Q1133.6 1278.9 1135.8 1277.6" stroke="#ff4500" stroke-width=".7"/>
</svg>

<!-- texts -->
<span class="t" style="left:30.50px;top:115.32px;font-size:20.3px;color:#666;letter-spacing:0.311px;">MENU</span>
<span class="t" style="left:71.30px;top:181.52px;font-size:20.3px;color:#383838;letter-spacing:0.708px;">Dashboard</span>
<span class="t" style="left:71.30px;top:284.72px;font-size:20.3px;color:#1f76f9;letter-spacing:0.689px;">example.com</span>
<span class="t" style="left:72.00px;top:345.72px;font-size:20.3px;color:#383838;letter-spacing:0.535px;">example.net</span>
<span class="t" style="left:72.00px;top:406.72px;font-size:20.3px;color:#383838;letter-spacing:0.627px;">example.org</span>
<span class="t" style="left:30.00px;top:1252.20px;font-size:16.3px;color:#6e6e6e;letter-spacing:0.403px;">126.3K of 1M pageviews used.</span>
<span class="t" style="left:97.60px;top:1345.22px;font-size:20.3px;color:#222;letter-spacing:0.680px;">John Doe</span>
<span class="t" style="left:97.60px;top:1374.50px;font-size:16.3px;color:#666;letter-spacing:0.673px;">Settings</span>
<span class="t" style="left:370.70px;top:61.62px;font-size:20.3px;color:#666;letter-spacing:1.027px;">Home</span>
<span class="t" style="left:485.10px;top:61.62px;font-size:20.3px;color:#222;letter-spacing:0.856px;">Stats</span>
<span class="t" style="left:370.90px;top:104.89px;font-size:41.6px;color:#1f1f1f;letter-spacing:1.330px;">example.com</span>
<span class="t" style="left:1616.00px;top:116.72px;font-size:20.3px;color:#666;letter-spacing:0.940px;">Last 30 days</span>
<span class="t" style="left:421.80px;top:197.02px;font-size:20.3px;color:#444;letter-spacing:0.593px;">Realtime</span>
<span class="t" style="left:618.60px;top:197.02px;font-size:20.3px;color:#1f76f9;letter-spacing:0.861px;">Overview</span>
<span class="t" style="left:800.90px;top:197.02px;font-size:20.3px;color:#444;letter-spacing:0.615px;">Behavior</span>
<span class="t" style="left:1003.80px;top:197.02px;font-size:20.3px;color:#444;letter-spacing:0.875px;">Acquisitions</span>
<span class="t" style="left:1238.60px;top:197.02px;font-size:20.3px;color:#444;letter-spacing:0.843px;">Geographic</span>
<span class="t" style="left:1468.20px;top:197.02px;font-size:20.3px;color:#444;letter-spacing:0.926px;">Technology</span>
<span class="t" style="left:1697.40px;top:197.02px;font-size:20.3px;color:#444;letter-spacing:0.648px;">Events</span>
<span class="t" style="left:546.50px;top:319.12px;font-size:20.3px;color:#1f1f1f;letter-spacing:0.379px;font-weight:700;-webkit-text-stroke-width:0;">Visitors</span>
<span class="t" style="left:546.50px;top:349.72px;font-size:20.3px;color:#1fa53f;letter-spacing:-0.765px;">4.7%</span>
<span class="t" style="left:946.30px;top:322.67px;font-size:42.8px;color:#222;letter-spacing:0.034px;font-weight:700;-webkit-text-stroke-width:0;">125,615</span>
<span class="t" style="left:1195.10px;top:319.12px;font-size:20.3px;color:#1f1f1f;letter-spacing:0.507px;font-weight:700;-webkit-text-stroke-width:0;">Pageviews</span>
<span class="t" style="left:1196.10px;top:349.72px;font-size:20.3px;color:#dc3545;letter-spacing:-0.698px;">0.5%</span>
<span class="t" style="left:1595.30px;top:322.67px;font-size:42.8px;color:#222;letter-spacing:0.350px;font-weight:700;-webkit-text-stroke-width:0;">317,590</span>
<span class="t" style="left:402.40px;top:432.69px;font-size:16.2px;color:#666;letter-spacing:-1.003px;">12K</span>
<span class="t" style="left:402.10px;top:472.04px;font-size:16.2px;color:#666;letter-spacing:-0.853px;">10K</span>
<span class="t" style="left:410.80px;top:511.39px;font-size:16.2px;color:#666;letter-spacing:-1.403px;">8K</span>
<span class="t" style="left:410.80px;top:550.74px;font-size:16.2px;color:#666;letter-spacing:-1.403px;">6K</span>
<span class="t" style="left:410.60px;top:590.09px;font-size:16.2px;color:#666;letter-spacing:-1.203px;">4K</span>
<span class="t" style="left:410.80px;top:629.44px;font-size:16.2px;color:#666;letter-spacing:-1.403px;">2K</span>
<span class="t" style="left:420.40px;top:668.79px;font-size:16.2px;color:#666;">0</span>
<span class="t" style="left:396.90px;top:818.02px;font-size:20.3px;color:#1f1f1f;letter-spacing:0.359px;">Pages</span>
<span class="t" style="left:396.90px;top:890.82px;font-size:20.3px;color:#777;letter-spacing:-1.196px;">URL</span>
<span class="t" style="left:927.60px;top:891.02px;font-size:20.3px;color:#777;letter-spacing:0.733px;">Pageviews</span>
<span class="t" style="left:397.30px;top:952.92px;font-size:20.3px;color:#333;">/</span>
<span class="t" style="left:961.00px;top:952.92px;font-size:20.3px;color:#333;letter-spacing:-0.439px;">199,131</span>
<span class="t" style="left:397.30px;top:1030.67px;font-size:20.3px;color:#333;letter-spacing:0.933px;">/dashboard</span>
<span class="t" style="left:965.10px;top:1030.67px;font-size:20.3px;color:#333;letter-spacing:0.909px;">53,769</span>
<span class="t" style="left:397.30px;top:1108.42px;font-size:20.3px;color:#333;letter-spacing:0.811px;">/register</span>
<span class="t" style="left:963.70px;top:1108.42px;font-size:20.3px;color:#333;letter-spacing:1.189px;">26,926</span>
<span class="t" style="left:397.30px;top:1186.17px;font-size:20.3px;color:#333;letter-spacing:1.059px;">/login</span>
<span class="t" style="left:966.80px;top:1186.17px;font-size:20.3px;color:#333;letter-spacing:0.569px;">15,252</span>
<span class="t" style="left:397.30px;top:1263.92px;font-size:20.3px;color:#333;letter-spacing:0.946px;">/welcome</span>
<span class="t" style="left:976.90px;top:1263.92px;font-size:20.3px;color:#333;letter-spacing:1.007px;">9,258</span>
<span class="t" style="left:664.70px;top:1347.32px;font-size:20.3px;color:#666;letter-spacing:0.670px;">View all</span>
<span class="t" style="left:1123.90px;top:818.02px;font-size:20.3px;color:#1f1f1f;letter-spacing:0.565px;">Referrers</span>
<span class="t" style="left:1124.10px;top:891.02px;font-size:20.3px;color:#777;letter-spacing:0.581px;">Website</span>
<span class="t" style="left:1687.30px;top:891.02px;font-size:20.3px;color:#777;letter-spacing:0.646px;">Visitors</span>
<span class="t" style="left:1155.60px;top:952.92px;font-size:20.3px;color:#333;letter-spacing:0.868px;">www.google.com</span>
<span class="t" style="left:1690.20px;top:952.92px;font-size:20.3px;color:#333;letter-spacing:1.169px;">25,465</span>
<span class="t" style="left:1155.60px;top:1030.67px;font-size:20.3px;color:#333;letter-spacing:0.904px;">www.bing.com</span>
<span class="t" style="left:1692.90px;top:1030.67px;font-size:20.3px;color:#333;letter-spacing:0.629px;">10,326</span>
<span class="t" style="left:1155.60px;top:1108.42px;font-size:20.3px;color:#333;letter-spacing:0.945px;">www.facebook.com</span>
<span class="t" style="left:1703.70px;top:1108.42px;font-size:20.3px;color:#333;letter-spacing:0.907px;">4,280</span>
<span class="t" style="left:1155.60px;top:1186.17px;font-size:20.3px;color:#333;letter-spacing:0.951px;">www.youtube.com</span>
<span class="t" style="left:1703.50px;top:1186.17px;font-size:20.3px;color:#333;letter-spacing:0.957px;">2,837</span>
<span class="t" style="left:1155.60px;top:1263.92px;font-size:20.3px;color:#333;letter-spacing:0.989px;">www.reddit.com</span>
<span class="t" style="left:1706.60px;top:1263.92px;font-size:20.3px;color:#333;letter-spacing:0.182px;">1,588</span>
<span class="t" style="left:1391.20px;top:1347.32px;font-size:20.3px;color:#666;letter-spacing:0.727px;">View all</span>
</body>
</html>
